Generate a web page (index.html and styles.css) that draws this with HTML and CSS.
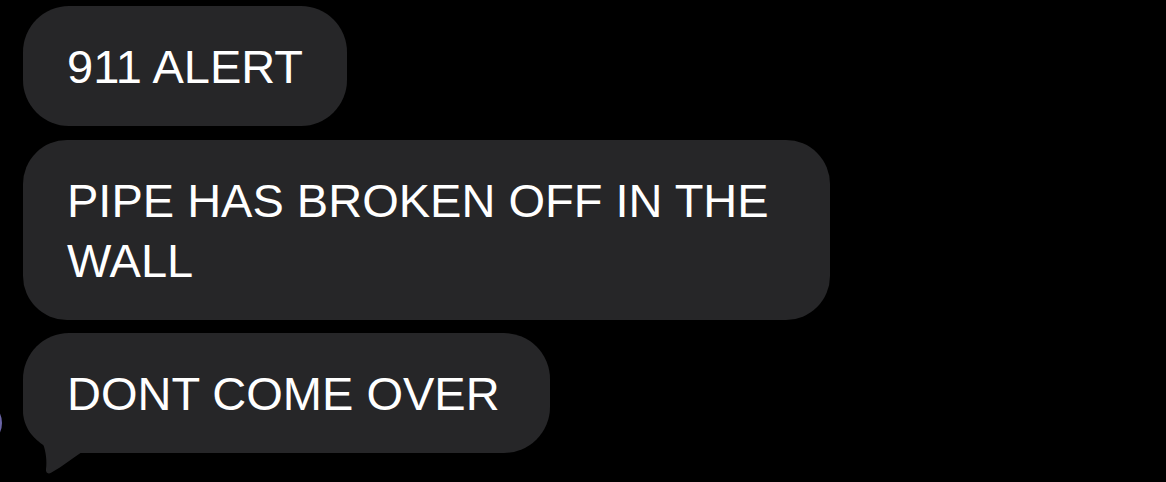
FILE: index.html
```html
<!DOCTYPE html>
<html lang="en">
<head>
<meta charset="utf-8">
<title>Messages</title>
<link rel="stylesheet" href="styles.css">
</head>
<body>
<main class="thread">
  <div class="avatar"></div>
  <div class="bubble"><span class="text">911 ALERT</span></div>
  <div class="bubble wide"><span class="text">PIPE HAS BROKEN OFF IN THE WALL</span></div>
  <div class="bubble last">
    <svg class="tail" width="70" height="76" viewBox="0 0 70 76" aria-hidden="true">
      <path d="M3,0 L3,10 C3,28 14,39 23,44 C26,51 27,62 26,69 C25.5,73 28,74.5 31.5,72.5 C43,66 53,58 62,52 L62,0 Z" fill="#262628"/>
    </svg>
    <span class="text">DONT COME OVER</span>
  </div>
</main>
</body>
</html>
```

FILE: styles.css
```css
html, body {
  margin: 0;
  padding: 0;
  background: #000;
}

body {
  width: 1166px;
  height: 482px;
  overflow: hidden;
  font-family: "Liberation Sans", Arial, sans-serif;
}

.thread {
  position: relative;
  display: flex;
  flex-direction: column;
  align-items: flex-start;
  gap: 14px;
  padding: 6px 0 0 23px;
}

.bubble {
  position: relative;
  box-sizing: border-box;
  background: #262628;
  color: #fff;
  font-size: 47px;
  line-height: 60px;
  padding: 31px 44px 29px 44px;
  border-radius: 46px;
}

.text {
  position: relative;
}

.wide {
  max-width: 807px;
  border-radius: 44px;
}

.last {
  margin-top: -1px;
  padding-right: 50px;
}

.tail {
  position: absolute;
  left: -3px;
  bottom: -23px;
}

.avatar {
  position: absolute;
  left: -44px;
  top: 400px;
  width: 46px;
  height: 46px;
  border-radius: 50%;
  box-sizing: border-box;
  border: 2px solid #6a64a6;
  background: #16142a;
}
```
